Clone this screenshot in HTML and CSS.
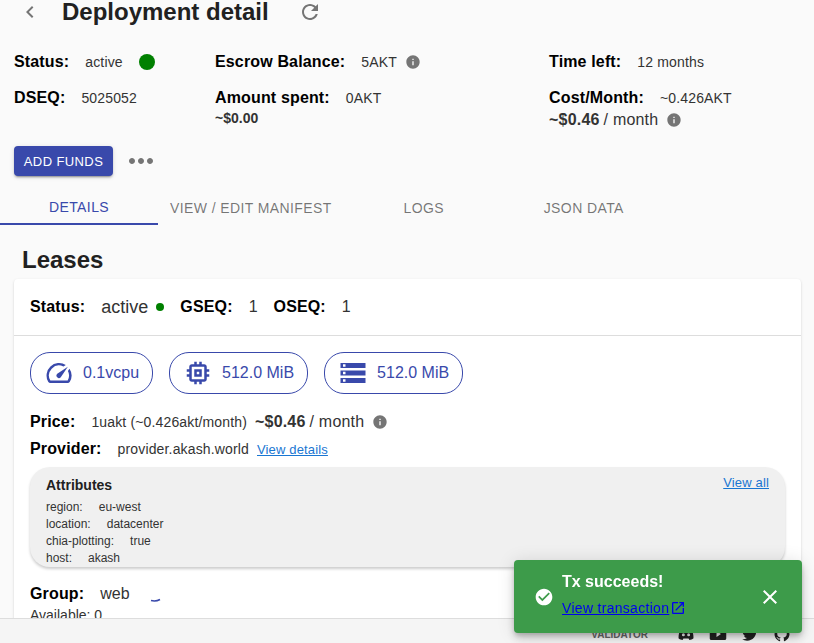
FILE: index.html
```html
<!DOCTYPE html>
<html lang="en">
<head>
    <meta charset="UTF-8">
    <meta name="viewport" content="width=device-width, initial-scale=1.0">
    <title>Deployment detail</title>
    <link rel="stylesheet" href="styles.css">
</head>
<body>
    <main class="content">
        <div class="page-head">
            <svg class="back-icon" viewBox="0 0 24 24"><path d="M15.41 7.41L14 6l-6 6 6 6 1.41-1.41L10.83 12z"/></svg>
            <h1>Deployment detail</h1>
            <svg class="refresh-icon" viewBox="0 0 24 24"><path d="M17.65 6.35C16.2 4.9 14.21 4 12 4c-4.42 0-7.99 3.58-7.99 8s3.57 8 7.99 8c3.73 0 6.84-2.55 7.73-6h-2.08c-.82 2.33-3.04 4-5.65 4-3.31 0-6-2.69-6-6s2.69-6 6-6c1.66 0 3.14.69 4.22 1.78L13 11h7V4l-2.35 2.35z"/></svg>
        </div>

        <div class="summary">
            <div class="cell">
                <div class="line"><b class="label">Status:</b><span class="value">active</span><span class="dot-big"></span></div>
            </div>
            <div class="cell">
                <div class="line"><b class="label">Escrow Balance:</b><span class="value">5AKT</span>
                    <svg class="info-icon" viewBox="0 0 24 24"><path d="M12 2C6.48 2 2 6.48 2 12s4.48 10 10 10 10-4.48 10-10S17.52 2 12 2zm1 15h-2v-6h2v6zm0-8h-2V7h2v2z"/></svg>
                </div>
            </div>
            <div class="cell">
                <div class="line"><b class="label">Time left:</b><span class="value">12 months</span></div>
            </div>
            <div class="cell">
                <div class="line"><b class="label">DSEQ:</b><span class="value">5025052</span></div>
            </div>
            <div class="cell">
                <div class="line"><b class="label">Amount spent:</b><span class="value">0AKT</span></div>
                <div class="usd-small">~$0.00</div>
            </div>
            <div class="cell">
                <div class="line"><b class="label">Cost/Month:</b><span class="value">~0.426AKT</span></div>
                <div class="usd cost-usd"><b>~$0.46</b> / month
                    <svg class="info-icon" viewBox="0 0 24 24"><path d="M12 2C6.48 2 2 6.48 2 12s4.48 10 10 10 10-4.48 10-10S17.52 2 12 2zm1 15h-2v-6h2v6zm0-8h-2V7h2v2z"/></svg>
                </div>
            </div>
        </div>

        <div class="actions">
            <button class="add-funds">ADD FUNDS</button>
            <svg class="more-icon" viewBox="0 0 24 24"><path d="M6 10c-1.1 0-2 .9-2 2s.9 2 2 2 2-.9 2-2-.9-2-2-2zm12 0c-1.1 0-2 .9-2 2s.9 2 2 2 2-.9 2-2-.9-2-2-2zm-6 0c-1.1 0-2 .9-2 2s.9 2 2 2 2-.9 2-2-.9-2-2-2z"/></svg>
        </div>

        <div class="tabs">
            <div class="tab tab-active">DETAILS</div>
            <div class="tab">VIEW / EDIT MANIFEST</div>
            <div class="tab">LOGS</div>
            <div class="tab">JSON DATA</div>
        </div>

        <h2>Leases</h2>

        <section class="card">
            <div class="card-head">
                <b class="label">Status:</b><span class="head-status">active</span><span class="dot-small"></span>
                <b class="label gseq">GSEQ:</b><span class="head-num">1</span>
                <b class="label oseq">OSEQ:</b><span class="head-num">1</span>
            </div>
            <div class="card-body">
                <div class="chips">
                    <div class="chip">
                        <svg viewBox="0 0 24 24"><path d="M20.38 8.57l-1.23 1.85a8 8 0 0 1-.22 7.58H5.07A8 8 0 0 1 15.58 6.85l1.85-1.23A10 10 0 0 0 3.35 19a2 2 0 0 0 1.72 1h13.85a2 2 0 0 0 1.74-1 10 10 0 0 0-.27-10.44zm-9.79 6.84a2 2 0 0 0 2.83 0l5.66-8.49-8.49 5.66a2 2 0 0 0 0 2.83z"/></svg>
                        0.1vcpu
                    </div>
                    <div class="chip">
                        <svg viewBox="0 0 24 24"><path d="M15 9H9v6h6V9zm-2 4h-2v-2h2v2zm8-2V9h-2V7c0-1.1-.9-2-2-2h-2V3h-2v2h-2V3H9v2H7c-1.1 0-2 .9-2 2v2H3v2h2v2H3v2h2v2c0 1.1.9 2 2 2h2v2h2v-2h2v2h2v-2h2c1.1 0 2-.9 2-2v-2h2v-2h-2v-2h2zm-4 6H7V7h10v10z"/></svg>
                        512.0 MiB
                    </div>
                    <div class="chip">
                        <svg viewBox="0 0 24 24"><path d="M2 20h20v-4H2v4zm2-3h2v2H4v-2zM2 4v4h20V4H2zm4 3H4V5h2v2zm-4 7h20v-4H2v4zm2-3h2v2H4v-2z"/></svg>
                        512.0 MiB
                    </div>
                </div>

                <div class="price-row">
                    <b class="label">Price:</b><span class="value">1uakt (~0.426akt/month)</span>
                    <span class="usd price-usd"><b>~$0.46</b> / month</span>
                    <svg class="info-icon" viewBox="0 0 24 24"><path d="M12 2C6.48 2 2 6.48 2 12s4.48 10 10 10 10-4.48 10-10S17.52 2 12 2zm1 15h-2v-6h2v6zm0-8h-2V7h2v2z"/></svg>
                </div>
                <div class="provider-row">
                    <b class="label">Provider:</b><span class="value">provider.akash.world</span><a class="link" href="#">View details</a>
                </div>

                <div class="attributes">
                    <div class="attr-head">
                        <b>Attributes</b>
                        <a class="link" href="#">View all</a>
                    </div>
                    <div class="attr"><span>region:</span><span>eu-west</span></div>
                    <div class="attr"><span>location:</span><span>datacenter</span></div>
                    <div class="attr"><span>chia-plotting:</span><span>true</span></div>
                    <div class="attr"><span>host:</span><span>akash</span></div>
                </div>

                <div class="group-row">
                    <b class="label">Group:</b><span class="head-value">web</span>
                    <svg class="spinner" viewBox="0 0 12 6"><path d="M1 4.500c3 .8 6 .6 9-1"/></svg>
                </div>
                <div class="available">Available: 0</div>
            </div>
        </section>
    </main>

    <footer class="footer">
        <span class="footer-text">VALIDATOR</span>
        <svg viewBox="0 0 24 24"><path d="M5 5c2-1 4-1.700 5-1.800L10.500 5h3L14 3.200c1 .1 3 .8 5 1.800 2 3.500 3 8 3 12.500-1.500 1.300-3.500 2.200-5.500 2.500L15.500 18h-7l-1 2C5.500 19.700 3.500 18.800 2 17.500 2 13 3 8.500 5 5zm3.500 6a2 2 0 1 0 0 4 2 2 0 0 0 0-4zm7 0a2 2 0 1 0 0 4 2 2 0 0 0 0-4z"/></svg>
        <svg viewBox="0 0 24 24"><path d="M21 4H3C1.900 4 1 4.900 1 6v12c0 1.100.9 2 2 2h18c1.100 0 2-.9 2-2V6c0-1.100-.9-2-2-2zM10 16V8l6 4-6 4z"/></svg>
        <svg viewBox="0 0 24 24"><path d="M22.460 6c-.77.35-1.600.58-2.460.69.880-.53 1.560-1.370 1.880-2.380-.83.5-1.750.85-2.720 1.050C18.370 4.500 17.260 4 16 4c-2.350 0-4.270 1.920-4.270 4.290 0 .34.04.67.11.98C8.280 9.090 5.110 7.380 3 4.790c-.37.63-.58 1.370-.58 2.150 0 1.490.75 2.810 1.910 3.560-.71 0-1.370-.2-1.910-.5v.03c0 2.080 1.480 3.820 3.440 4.210a4.220 4.220 0 0 1-1.930.07 4.280 4.280 0 0 0 4 2.980 8.521 8.521 0 0 1-5.330 1.840c-.34 0-.68-.02-1.020-.06C3.440 20.290 5.700 21 8.120 21 16 21 20.330 14.460 20.330 8.790c0-.19 0-.37-.01-.56.84-.6 1.560-1.360 2.140-2.230z"/></svg>
        <svg viewBox="0 0 24 24"><path d="M12 2A10 10 0 0 0 2 12c0 4.420 2.870 8.170 6.840 9.500.5.08.66-.23.66-.5v-1.690c-2.770.6-3.360-1.340-3.360-1.340-.46-1.160-1.110-1.470-1.110-1.470-.91-.62.07-.6.07-.6 1 .07 1.530 1.030 1.530 1.030.87 1.520 2.340 1.070 2.910.83.09-.65.35-1.090.63-1.340-2.220-.25-4.550-1.110-4.550-4.920 0-1.110.38-2 1.030-2.710-.1-.25-.45-1.290.1-2.640 0 0 .84-.27 2.750 1.020.79-.22 1.650-.33 2.500-.33.85 0 1.710.11 2.500.33 1.910-1.290 2.750-1.020 2.750-1.020.55 1.350.2 2.390.1 2.640.65.71 1.030 1.600 1.030 2.710 0 3.820-2.340 4.660-4.570 4.910.36.31.69.92.69 1.850V21c0 .27.16.59.67.5C19.140 20.160 22 16.420 22 12A10 10 0 0 0 12 2z"/></svg>
    </footer>

    <div class="toast">
        <svg class="toast-check" viewBox="0 0 24 24"><path d="M12 2C6.480 2 2 6.480 2 12s4.480 10 10 10 10-4.480 10-10S17.520 2 12 2zm-2 15l-5-5 1.410-1.410L10 14.170l7.590-7.590L19 8l-9 9z"/></svg>
        <div class="toast-text">
            <div class="toast-title">Tx succeeds!</div>
            <a class="toast-link" href="#">View transaction<svg viewBox="0 0 24 24"><path d="M19 19H5V5h7V3H5c-1.110 0-2 .9-2 2v14c0 1.100.89 2 2 2h14c1.100 0 2-.9 2-2v-7h-2v7zM14 3v2h3.590l-9.830 9.830 1.410 1.410L19 6.410V10h2V3h-7z"/></svg></a>
        </div>
        <svg class="toast-close" viewBox="0 0 24 24"><path d="M19 6.410L17.590 5 12 10.590 6.410 5 5 6.410 10.590 12 5 17.590 6.410 19 12 13.410 17.590 19 19 17.590 13.410 12 19 6.410z"/></svg>
    </div>
</body>
</html>
```

FILE: styles.css
```css
* {
    box-sizing: border-box;
}
html, body {
    height: 100%;
}
body {
    font-family: "Liberation Sans", Arial, sans-serif;
    background-color: #fafafa;
    color: rgba(0, 0, 0, 0.87);
    display: flex;
    flex-direction: column;
    height: 100vh;
    margin: 0;
    overflow: hidden;
}
svg {
    fill: currentColor;
    flex-shrink: 0;
}
a {
    text-decoration: underline;
}
.content {
    flex: 1;
    min-height: 0;
    overflow: hidden;
}

/* header */
.page-head {
    display: flex;
    align-items: center;
    height: 24px;
    padding-left: 18px;
}
.back-icon {
    width: 24px;
    height: 24px;
    color: #757575;
}
.page-head h1 {
    font-size: 24px;
    font-weight: 700;
    line-height: 24px;
    margin: 0 0 0 20px;
    color: #212121;
}
.refresh-icon {
    width: 24px;
    height: 24px;
    margin-left: 29px;
    color: #757575;
}

/* summary */
.summary {
    display: grid;
    grid-template-columns: 201px 334px 1fr;
    grid-template-rows: 36px 44px;
    margin-top: 27px;
    padding-left: 14px;
}
.line {
    display: flex;
    align-items: center;
    height: 22px;
}
.label {
    font-size: 16px;
    font-weight: 700;
    letter-spacing: 0.15px;
    color: #000;
}
.value {
    font-size: 14px;
    letter-spacing: 0.15px;
    margin-left: 16px;
    color: #333;
}
.dot-big {
    width: 16px;
    height: 16px;
    border-radius: 50%;
    background-color: #008000;
    margin-left: 16px;
}
.info-icon {
    width: 16px;
    height: 16px;
    margin-left: 8px;
    color: #757575;
}
.usd-small {
    font-size: 14px;
    font-weight: 700;
    line-height: 14px;
    margin-top: 2px;
    color: #333;
}
.usd {
    display: flex;
    align-items: center;
    gap: 4px;
    font-size: 16px;
    line-height: 16px;
    letter-spacing: 0.2px;
    color: #333;
}
.usd b {
    font-weight: 700;
}
.cost-usd {
    margin-top: 3px;
}
.cost-usd .info-icon {
    margin-left: 4px;
}

/* actions */
.actions {
    display: flex;
    align-items: center;
    margin-top: 12px;
    padding-left: 14px;
}
.add-funds {
    width: 99px;
    height: 30px;
    padding: 0;
    border: none;
    border-radius: 4px;
    background-color: #3949ab;
    color: #fff;
    font-family: "Liberation Sans", Arial, sans-serif;
    font-size: 13px;
    letter-spacing: 0.4px;
    box-shadow: 0 3px 1px -2px rgba(0,0,0,.2), 0 2px 2px 0 rgba(0,0,0,.14), 0 1px 5px 0 rgba(0,0,0,.12);
}
.more-icon {
    width: 36px;
    height: 36px;
    margin-left: 10px;
    color: #757575;
}

/* tabs */
.tabs {
    display: flex;
    margin-top: 11px;
}
.tab {
    height: 35px;
    min-width: 160px;
    padding: 0 12px;
    display: flex;
    align-items: center;
    justify-content: center;
    font-size: 14px;
    letter-spacing: 0.4px;
    color: rgba(0, 0, 0, 0.54);
}
.tab-active {
    width: 158px;
    min-width: 158px;
    color: #3949ab;
    border-bottom: 2px solid #3949ab;
}

/* lease card */
h2 {
    font-size: 24px;
    font-weight: 700;
    line-height: 28px;
    margin: 21px 0 5px 22px;
    color: #212121;
}
.card {
    margin: 0 13px 0 14px;
    background-color: #fff;
    border-radius: 4px;
    box-shadow: 0 2px 1px -1px rgba(0,0,0,.2), 0 1px 1px 0 rgba(0,0,0,.14), 0 1px 3px 0 rgba(0,0,0,.12);
}
.card-head {
    display: flex;
    align-items: center;
    height: 57px;
    padding-left: 16px;
    border-bottom: 1px solid #ddd;
}
.head-status {
    font-size: 18px;
    margin-left: 16px;
    color: #333;
}
.head-value {
    font-size: 16px;
    margin-left: 16px;
    color: #333;
}
.head-num {
    font-size: 16px;
    margin-left: 16px;
    color: #333;
}
.dot-small {
    width: 8px;
    height: 8px;
    border-radius: 50%;
    background-color: #008000;
    margin-left: 8px;
}
.gseq, .oseq {
    margin-left: 16px;
}
.card-body {
    padding: 16px 16px 0;
}
.chips {
    display: flex;
    gap: 16px;
}
.chip {
    display: flex;
    align-items: center;
    gap: 9px;
    height: 42px;
    padding: 0 13px;
    border: 1px solid #3949ab;
    border-radius: 20px;
    color: #3949ab;
    font-size: 16px;
}
.chip svg {
    width: 30px;
    height: 30px;
}
.price-row, .provider-row {
    display: flex;
    align-items: center;
    height: 22px;
}
.price-row {
    margin-top: 17px;
}
.provider-row {
    margin-top: 5px;
}
.price-row .usd {
    margin-left: 8px;
}
.link {
    font-size: 13px;
    letter-spacing: 0.15px;
    color: #1976d2;
    margin-left: 8px;
}

/* attributes */
.attributes {
    height: 100px;
    margin-top: 7px;
    padding: 10px 16px 0;
    overflow: hidden;
    background-color: #f0f0f0;
    border-radius: 20px;
    box-shadow: 0 2px 3px rgba(0, 0, 0, 0.2);
}
.attr-head {
    display: flex;
    justify-content: space-between;
    align-items: flex-start;
    height: 22px;
    font-size: 14px;
    color: #212121;
}
.attr-head .link {
    margin-top: -2px;
}
.attr {
    display: flex;
    gap: 16px;
    font-size: 12px;
    line-height: 17px;
    color: #333;
}

.group-row {
    display: flex;
    align-items: center;
    height: 22px;
    margin-top: 16px;
}
.spinner {
    width: 12px;
    height: 6px;
    margin: 10px 0 0 20px;
    fill: none;
    stroke: #3949ab;
    stroke-width: 1.5;
}
.available {
    font-size: 14px;
    line-height: 16px;
    margin-top: 2px;
    color: #333;
}

/* footer */
.footer {
    flex: 0 0 25px;
    display: flex;
    align-items: center;
    justify-content: flex-end;
    overflow: hidden;
    gap: 14px;
    padding: 6px 23px 0 0;
    background-color: #f5f5f5;
    border-top: 1px solid #ddd;
    color: #212121;
}
.footer svg {
    width: 18px;
    height: 18px;
}
.footer-text {
    font-size: 10px;
    font-weight: 700;
    color: #666;
    margin-right: 15px;
}

/* toast */
.toast {
    position: fixed;
    left: 514px;
    top: 560px;
    width: 288px;
    height: 73px;
    display: flex;
    align-items: center;
    background-color: #3d9b4a;
    border-radius: 4px;
    color: #fff;
    box-shadow: 0 3px 5px -1px rgba(0,0,0,.2), 0 6px 10px 0 rgba(0,0,0,.14), 0 1px 18px 0 rgba(0,0,0,.12);
}
.toast-check {
    width: 20px;
    height: 20px;
    margin-left: 20px;
}
.toast-text {
    margin: 0 0 6px 8px;
    flex: 1;
}
.toast-title {
    font-size: 16px;
    font-weight: 700;
    line-height: 20px;
}
.toast-link {
    display: flex;
    align-items: center;
    font-size: 14px;
    letter-spacing: 0.3px;
    margin-top: 8px;
    color: #0000ee;
    text-decoration: underline;
}
.toast-link svg {
    width: 16px;
    height: 16px;
    margin-left: 1px;
}
.toast-close {
    width: 24px;
    height: 24px;
    margin-right: 20px;
}
```
